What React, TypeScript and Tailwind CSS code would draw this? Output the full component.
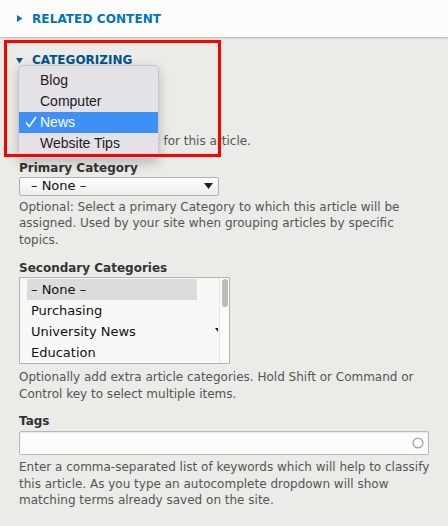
import React from "react";

const font = { fontFamily: '"DejaVu Sans", "Liberation Sans", sans-serif' };

const menuItems = ["Blog", "Computer", "News", "Website Tips"];
const secondary = ["– None –", "Purchasing", "University News", "Education"];

function Caret({ open }: { open: boolean }) {
  return (
    <svg width="7" height="7" viewBox="0 0 7 7" className="shrink-0">
      {open ? <path d="M0 1h7L3.5 6.5z" fill="currentColor" /> : <path d="M1 0v7l5.5-3.5z" fill="currentColor" />}
    </svg>
  );
}

export default function App() {
  return (
    <div
      className="relative w-[448px] h-[526px] overflow-hidden bg-[#ebebe7] text-[#333]"
      style={font}
    >
      {/* collapsed fieldset */}
      <div className="relative z-10 h-[37px] bg-[#fcfcfa] shadow-[0_1px_2px_rgba(0,0,0,0.25)] flex items-center pl-[16px] gap-[9px] text-[#0074bd]">
        <Caret open={false} />
        <span className="text-[12px] font-bold leading-[16px] tracking-[0.1px]">RELATED CONTENT</span>
      </div>

      <div className="pl-[19px] pr-[19px]">
        <div className="pt-[15px] -ml-[3px] flex items-center gap-[9px] text-[#00548f]">
          <Caret open={true} />
          <span className="text-[12px] font-bold leading-[16px]">CATEGORIZING</span>
        </div>

        {/* covered by the open popup */}
        <div className="h-[65px] pt-[20px]">
          <div className="text-[12px] font-bold leading-[16px]">Category</div>
          <div className="mt-[7px] h-[19px] w-[130px] border border-[#b0b0ae] rounded-[2px] bg-[#f6f6f4]" />
        </div>
        <p className="text-[12px] leading-[16.5px] text-[#555]">
          Select a main Category for this article.
        </p>

        <div className="mt-[10px] text-[12px] font-bold leading-[16px]">Primary Category</div>
        <div className="mt-[1px] w-[200px] h-[19px] flex items-center justify-between pl-[11px] pr-[5px] border border-[#b0b0ae] rounded-[2px] bg-gradient-to-b from-[#fefefe] to-[#eeeeec]">
          <span className="text-[13px] leading-[16px] text-[#111]">– None –</span>
          <svg width="9" height="6" viewBox="0 0 9 6">
            <path d="M0 0h9L4.5 6z" fill="#222" />
          </svg>
        </div>
        <p className="mt-[3px] -mr-[4px] text-[12px] leading-[16.5px] text-[#555]">
          Optional: Select a primary Category to which this article will be assigned. Used by your site when grouping articles by specific topics.
        </p>

        <div className="mt-[12px] text-[12px] font-bold leading-[16px]">Secondary Categories</div>
        <div className="mt-[1px] w-[211px] h-[87px] border border-[#b4b4b2] bg-[#f8f8f6] flex">
          <div className="flex-1 pt-[1px] pl-[7px]">
            {secondary.map((s, i) => (
              <div
                key={s}
                className={
                  "w-[170px] h-[21px] pl-[4px] flex items-center text-[13px] text-[#111] " +
                  (i === 0 ? "bg-[#dcdcdc]" : "")
                }
              >
                {s}
                {i === 2 && <span className="ml-auto mr-[-21px] mb-[4px] w-0 h-0 border-t-[4px] border-l-[3px] border-t-[#111] border-l-transparent" />}
              </div>
            ))}
          </div>
          <div className="w-[10px] bg-[#fafafa] border-l border-[#e6e6e4] pt-[1px] flex justify-center">
            <div className="w-[6px] h-[28px] rounded-full bg-[#bcbcbc]" />
          </div>
        </div>
        <p className="mt-[5px] -mr-[4px] text-[12px] leading-[16.5px] text-[#555]">
          Optionally add extra article categories. Hold Shift or Command or Control key to select multiple items.
        </p>

        <div className="mt-[11px] text-[12px] font-bold leading-[16px]">Tags</div>
        <div className="mt-[2px] w-[410px] h-[24px] border border-[#b8b8b6] rounded-[2px] bg-[#fcfcfa] shadow-[inset_0_1px_1px_rgba(0,0,0,0.08)] flex items-center justify-end pr-[4px]">
          <svg width="12" height="12" viewBox="0 0 12 12">
            <circle cx="6" cy="6" r="4.8" fill="none" stroke="#a8a8a8" strokeWidth="1.5" />
          </svg>
        </div>
        <p className="mt-[4px] -mr-[6px] text-[12px] leading-[16.5px] text-[#555]">
          Enter a comma-separated list of keywords which will help to classify this article. As you type an autocomplete dropdown will show matching terms already saved on the site.
        </p>
      </div>

      {/* open native popup */}
      <div
        className="absolute left-[18px] top-[65px] z-20 w-[141px] py-[4px] rounded-[5px] bg-[#e4e2e7] border border-[#c8c6cb] shadow-[0_4px_12px_rgba(0,0,0,0.22)]"
        style={{ fontFamily: '"Liberation Sans", Arial, sans-serif' }}
      >
        {menuItems.map((m) => {
          const on = m === "News";
          return (
            <div
              key={m}
              className={
                "relative h-[21px] pl-[21px] flex items-center text-[14px] " +
                (on ? "bg-[#3e8ff6] text-white" : "text-[#1a1a1a]")
              }
            >
              {on && (
                <svg width="12" height="12" viewBox="0 0 12 12" className="absolute left-[6px] top-[4px]">
                  <path d="M1 6.5 L4.3 10.5 L11 1" fill="none" stroke="white" strokeWidth="1.6" />
                </svg>
              )}
              {m}
            </div>
          );
        })}
      </div>

      {/* annotation box */}
      <div className="absolute left-[4px] top-[40px] z-30 w-[217px] h-[117px] border-[3px] border-[#ff0000]" />
    </div>
  );
}
